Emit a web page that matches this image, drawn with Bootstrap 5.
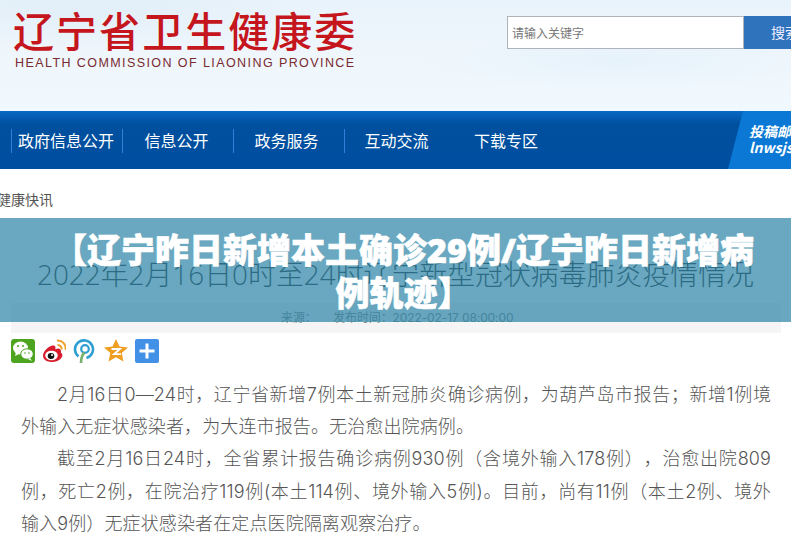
<!DOCTYPE html>
<html lang="zh">
<head>
  <meta charset="utf-8">
  <title>辽宁省卫生健康委</title>
  <link rel="stylesheet" href="https://cdn.jsdelivr.net/npm/bootstrap@5.3.0/dist/css/bootstrap.min.css">
  <style>
    html, body { height: 540px; overflow: hidden; }
    body { font-family: "Inter", "Noto Sans CJK SC", sans-serif; background: #fff; position: relative; width: 791px; text-spacing-trim: space-all; }
    .site-top { height: 111px; background: radial-gradient(ellipse 220px 40px at 90px 8px, #e2eff8, transparent), radial-gradient(ellipse 200px 30px at 620px 60px, #e6f2fb, transparent), linear-gradient(180deg, #e9f3fb 0%, #eff6fc 50%, #f0f9ff 100%); padding: 6px 0 0 13px; }
    .logo-cn { font-family: "Noto Sans CJK SC", sans-serif; font-weight: 500; font-size: 41px; line-height: 46px; color: #c4161c; letter-spacing: 2.05px; white-space: nowrap; }
    .logo-en { font-family: "Liberation Sans", sans-serif; font-size: 12.5px; line-height: 14px; color: #7a2a30; letter-spacing: 1.42px; margin: 4px 0 0 2px; white-space: nowrap; }
    .search-box { margin-top: 10px; width: 284px; flex-shrink: 0; }
    .search-input { width: 237px; height: 33px; border: 1px solid #aeb4ba; background: #fff; color: #777; font-size: 12px; line-height: 31px; padding-left: 4px; font-family: "Noto Sans CJK SC", sans-serif; }
    .search-btn { flex: 1; height: 33px; background: #2f73bd; color: #eef; font-size: 14px; line-height: 33px; padding-left: 27px; font-family: "Noto Sans CJK SC", sans-serif; white-space: nowrap; overflow: hidden; }
    .main-nav { height: 58px; background: linear-gradient(180deg, #0a69c4 0%, #00509f 22%, #004ea0 100%); overflow: hidden; position: relative; padding-left: 11px; }
    .main-nav a { display: block; width: 111px; height: 24px; margin-top: 18px; border-left: 1px solid #2f80d8; color: #fff; text-decoration: none; text-align: center; font-family: "Noto Sans CJK SC", sans-serif; font-size: 16px; line-height: 22px; }
    .main-nav a:nth-child(1) { padding-right: 2px; }
    .main-nav a:nth-child(2) { padding-right: 3px; }
    .main-nav a:nth-child(3) { padding-right: 5px; }
    .main-nav a:nth-child(4) { padding-right: 7px; }
    .main-nav a:nth-child(5) { padding-right: 9px; border-left: 0; }
    .mail-tab { position: absolute; top: 0; right: -30px; width: 93px; height: 58px; background: #0a78d4; transform: skewX(-14.5deg); transform-origin: bottom left; }
    .mail-text { position: absolute; top: 12px; left: 749px; color: #fff; font-family: "Noto Sans CJK SC", sans-serif; font-style: italic; font-weight: 700; font-size: 14px; line-height: 16px; white-space: nowrap; }
    .crumb { font-family: "Noto Sans CJK SC", sans-serif; font-size: 14px; line-height: 18px; color: #555; margin: 21px 0 0 -3px; }
    .art-title { font-family: "Open Sans", "Noto Sans CJK SC", sans-serif; font-weight: 300; font-size: 27.9px; line-height: 36px; color: #333; text-align: center; margin: 48px 0 0; white-space: nowrap; }
    .meta-bar { margin: 11px 10px 0 11px; height: 30px; background: #f5f5f5; color: #888; font-size: 12px; letter-spacing: -.1px; line-height: 30px; padding-left: 270px; }
    .share-row { margin: 6px 0 0 11px; height: 24px; gap: 7px; }
    .share-row svg { display: block; width: 24px; height: 24px; }
    .art-body { margin: 16px 20px 0 21px; font-weight: 300; font-size: 18px; letter-spacing: .12px; line-height: 32.2px; color: #555; text-align: justify; }
    .art-body p { margin: 0; text-indent: 2em; }
    .news-banner { position: absolute; left: 0; right: 0; top: 218px; height: 104px; background: rgba(42, 131, 165, .7); color: #fff; text-align: center; font-family: "Open Sans", "Noto Sans CJK SC", sans-serif; font-weight: 900; font-size: 34px; line-height: 43px; padding: 11px 30px 0 46px; -webkit-text-stroke: .6px #fff; }
  </style>
</head>
<body>
  <header class="site-top d-flex justify-content-between">
    <div>
      <div class="logo-cn">辽宁省卫生健康委</div>
      <p class="logo-en">HEALTH COMMISSION OF LIAONING PROVINCE</p>
    </div>
    <div class="search-box d-flex">
      <div class="search-input">请输入关键字</div>
      <div class="search-btn">搜索</div>
    </div>
  </header>

  <nav class="main-nav d-flex">
    <a href="#">政府信息公开</a>
    <a href="#">信息公开</a>
    <a href="#">政务服务</a>
    <a href="#">互动交流</a>
    <a href="#">下载专区</a>
    <div class="mail-tab"></div>
    <div class="mail-text">投稿邮箱<br>lnwsjsw@163.com</div>
  </nav>

  <div class="crumb">健康快讯</div>
  <h1 class="art-title">2022年2月16日0时至24时辽宁新型冠状病毒肺炎疫情情况</h1>
  <div class="meta-bar">来源：&nbsp;&nbsp;&nbsp;&nbsp;&nbsp;发布时间：2022-02-17 08:00:00</div>

  <div class="share-row d-flex align-items-center">
    <!-- wechat -->
    <svg viewBox="0 0 24 24"><rect width="24" height="24" rx="3" fill="#4da51f"/><ellipse cx="9.5" cy="9" rx="7.5" ry="6.4" fill="#fff"/><path d="M5 13l-1 4 4-2z" fill="#fff"/><ellipse cx="16" cy="15" rx="6.3" ry="5.2" fill="#fff" stroke="#4da51f"/><path d="M19 19l2 3-4-2z" fill="#fff"/><circle cx="7" cy="7" r="1" fill="#4da51f"/><circle cx="12" cy="7" r="1" fill="#4da51f"/><circle cx="14" cy="14" r=".8" fill="#4da51f"/><circle cx="18" cy="14" r=".8" fill="#4da51f"/></svg>
    <!-- weibo -->
    <svg viewBox="0 0 24 24"><path d="M1 16.500C1 12 8 5.500 12 6.500c2 .6 1.500 3 1.300 3.800 3-1.300 5.700-.8 5.700 2 0 .8-.3 1.500.3 1.700 1 .5 1 1.500 1 2.500 0 3-5 6.500-10 6.500S1 21 1 16.500z" fill="#d81e2c"/><ellipse cx="9.500" cy="16.500" rx="6.300" ry="4.800" fill="#fff"/><ellipse cx="9" cy="17" rx="3.300" ry="3" fill="#111"/><circle cx="10" cy="16" r="1" fill="#fff"/><path d="M15 1.500a8 8 0 0 1 8.500 9.500" fill="none" stroke="#eea029" stroke-width="2"/><path d="M15.500 6a3.700 3.700 0 0 1 4 4.500" fill="none" stroke="#eea029" stroke-width="2"/></svg>
    <!-- tencent p -->
    <svg viewBox="0 0 24 24"><path d="M5.500 17.500A9 9 0 1 1 13.500 19" fill="none" stroke="#2f9fd2" stroke-width="2.600"/><circle cx="12" cy="10" r="3.800" fill="none" stroke="#2f9fd2" stroke-width="2.200"/><path d="M8 24c0-5 1-8 3.500-10.500" fill="none" stroke="#76b06a" stroke-width="2.600"/></svg>
    <!-- qzone -->
    <svg viewBox="0 0 24 24"><path d="M12 0l3.500 7.500 8.500.9-6.300 5.700 1.800 8.400-7.500-4.200-7.500 4.200 1.800-8.400L0 8.400l8.500-.9z" fill="#ee9f22"/><path d="M7.500 10h8.500l-6 5.200h7" fill="none" stroke="#fff" stroke-width="1.800"/></svg>
    <!-- more -->
    <svg viewBox="0 0 24 24"><rect width="24" height="24" rx="2" fill="#4291e6"/><path d="M10.500 4.500h3v6h6v3h-6v6h-3v-6h-6v-3h6z" fill="#fff"/></svg>
  </div>

  <div class="art-body">
    <p>2月16日0—24时，辽宁省新增7例本土新冠肺炎确诊病例，为葫芦岛市报告；新增1例境外输入无症状感染者，为大连市报告。无治愈出院病例。</p>
    <p>截至2月16日24时，全省累计报告确诊病例930例（含境外输入178例），治愈出院809例，死亡2例，在院治疗119例(本土114例、境外输入5例)。目前，尚有11例（本土2例、境外<span class="text-nowrap">输入9例</span>）无症状感染者在定点医院隔离观察治疗。</p>
  </div>

  <div class="news-banner">【辽宁昨日新增本土确诊29例/辽宁昨日新增病例轨迹】</div>
  <script src="https://cdn.jsdelivr.net/npm/bootstrap@5.3.0/dist/js/bootstrap.bundle.min.js"></script>
</body>
</html>
